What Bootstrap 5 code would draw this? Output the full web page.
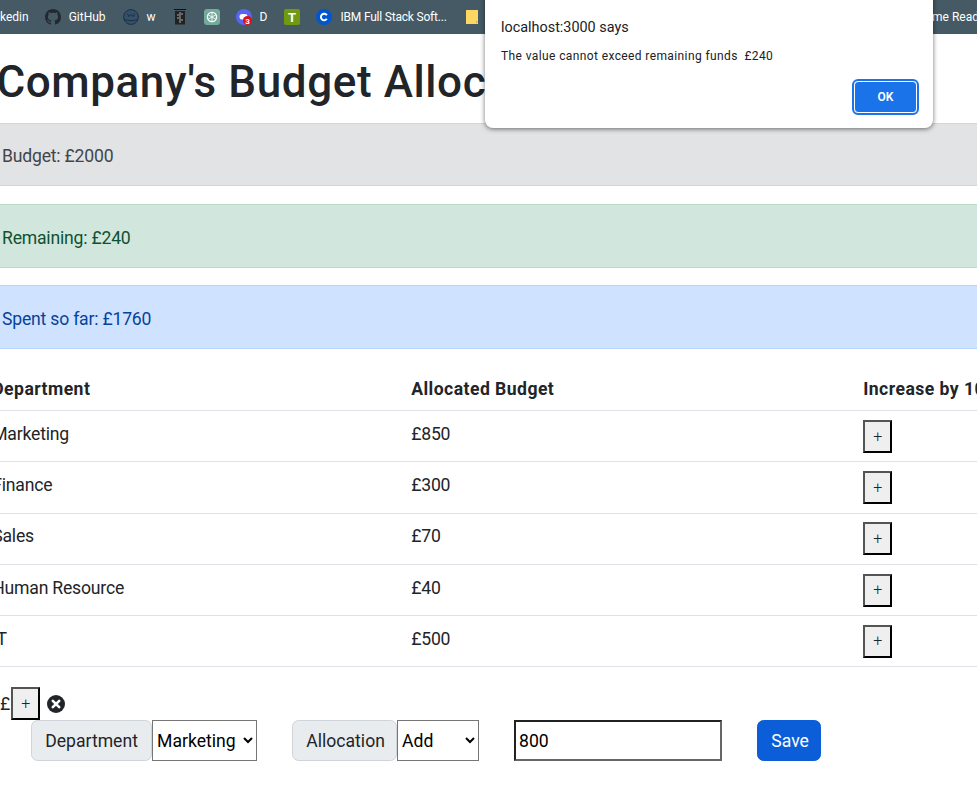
<!DOCTYPE html>
<html lang="en">
<head>
  <meta charset="UTF-8">
  <meta name="viewport" content="width=device-width, initial-scale=1.0">
  <title>Company's Budget Allocation</title>
  <link rel="stylesheet" href="https://cdn.jsdelivr.net/npm/bootstrap@5.3.0/dist/css/bootstrap.min.css">
  <style>
    html { font-size: 17.6px; }
    body {
      font-family: Roboto, "Noto Sans", sans-serif;
      font-size: 17.6px;
      color: #212529;
      overflow: hidden;
      height: 812px;
      position: relative;
    }

    .bm-bar {
      height: 34px;
      background-color: #455a64;
      color: #fff;
      font-size: 12px;
      white-space: nowrap;
      overflow: hidden;
    }
    .bm-item { gap: 8px; margin-right: 16px; }
    .bm-item svg { width: 16px; height: 16px; flex: none; }
    .bm-wide { margin-right: 17px; }
    .bm-long { margin-right: 18px; letter-spacing: -.2px; }
    .bm-end { margin-left: auto; margin-right: -2px; flex: none; }

    .page-wrap { width: 1320px; margin-left: -16.6px; }
    .page-title { font-size: 44px; letter-spacing: .6px; margin: 22px 0 14px 13px; }
    .budget-alert { padding: 19.6px 17.6px 15.6px; letter-spacing: -.2px; }
    .budget-alert-grey { background-color: #e2e3e5; border-color: #d3d6d8; color: #41464b; }
    .budget-alert-green { background-color: #d1e7dd; border-color: #badbcc; color: #0f5132; }
    .budget-alert-blue { background-color: #cfe2ff; border-color: #b6d4fe; color: #084298; }
    .dept-col { width: 419px; }
    .alloc-col { width: 452px; }
    .budget-table { margin-bottom: 20px; }
    .budget-table td, .budget-table th { border-color: #dee2e6; color: #212529; }
    .budget-table th { padding: 9.8px 8.8px 7.8px; letter-spacing: .45px; }
    .budget-table td { padding: 9.8px 8.8px 8px; letter-spacing: -.2px; }
    .budget-table td.btn-cell { padding: 8.8px 8.8px 8.4px; }
    .plus-btn { width: 29px; height: 33px; padding: 0; font-size: 16px; font-weight: 300; color: #212529; }
    .cost-line { padding-left: 16.6px; height: 33px; }
    .cost-line .plus-btn { margin-left: 1px; }
    .del-icon { width: 18px; height: 18px; margin-left: 7px; }
    .form-line { padding-left: 47.6px; }
    .form-line select { border: 1px solid #767676; background: #fff; height: 41px; }
    .form-line .input-group-text { height: 41px; background-color: #e9ecef; border-color: #ced4da; color: #212529; }
    .form-line .alloc-label { width: 105px; }
    .dept-select { width: 105px; }
    .alloc-select { width: 82px; }
    .alloc-group { margin-left: 35px; }
    .amount-input {
      width: 208px;
      height: 41px;
      margin-left: 35px;
      font-size: 17.6px;
      padding: 1px 3px;
      border-width: 2px;
      border-style: solid;
      border-color: #222 #666 #666 #222;
    }
    .save-btn { margin-left: 35px; height: 41px; width: 64px; background-color: #0b5ed7; border-color: #0b5ed7; }

    .js-dialog {
      position: absolute;
      left: 485px;
      top: -8px;
      width: 448px;
      height: 136px;
      background: #fff;
      border-radius: 8px;
      box-shadow: 0 1px 5px rgba(0, 0, 0, .55);
      padding: 26px 16px 0;
      color: #202124;
    }
    .js-dialog-title { font-size: 14.4px; line-height: 20px; margin-bottom: 9px; }
    .js-dialog-msg { font-size: 12px; line-height: 18px; letter-spacing: .39px; }
    .js-dialog-ok {
      position: absolute;
      right: 16px;
      bottom: 15px;
      width: 63px;
      height: 32px;
      background: #1a73e8;
      color: #fff;
      font-size: 12px;
      font-weight: 600;
      border: 1px solid #fff;
      outline: 2px solid #1a73e8;
      outline-offset: 0;
      border-radius: 4px;
    }
  </style>
</head>
<body>
  <div class="bm-bar d-flex align-items-center">
    <span class="bm-item d-flex align-items-center ms-n1">kedin</span>
    <span class="bm-item bm-wide d-flex align-items-center">
      <svg viewBox="0 0 16 16"><path fill="#24292f" d="M8 0C3.58 0 0 3.58 0 8c0 3.54 2.29 6.53 5.47 7.59.4.07.55-.17.55-.38 0-.19-.01-.82-.01-1.49-2.01.37-2.53-.49-2.69-.94-.09-.23-.48-.94-.82-1.13-.28-.15-.68-.52-.01-.53.63-.01 1.08.58 1.23.82.72 1.21 1.87.87 2.33.66.07-.52.28-.87.51-1.07-1.78-.2-3.64-.89-3.64-3.95 0-.87.31-1.59.82-2.15-.08-.2-.36-1.02.08-2.12 0 0 .67-.21 2.2.82.64-.18 1.32-.27 2-.27.68 0 1.36.09 2 .27 1.53-1.04 2.2-.82 2.2-.82.44 1.1.16 1.92.08 2.12.51.56.82 1.27.82 2.15 0 3.07-1.87 3.75-3.65 3.95.29.25.54.73.54 1.48 0 1.07-.01 1.93-.01 2.2 0 .21.15.46.55.38A8.012 8.012 0 0 0 16 8c0-4.42-3.58-8-8-8z"/></svg>
      GitHub
    </span>
    <span class="bm-item d-flex align-items-center">
      <svg viewBox="0 0 16 16"><circle cx="8" cy="8" r="7.4" fill="#34506a" stroke="#1d2f42" stroke-width="1"/><path d="M4.5 4.5l1.4 3.2 2.1-2.4 2.1 2.4 1.4-3.2" fill="none" stroke="#1d2f42" stroke-width="1"/><path d="M1.5 10.5c3 1.6 10 1.6 13 0" fill="none" stroke="#1d2f42"/></svg>
      w
    </span>
    <span class="bm-item d-flex align-items-center">
      <svg viewBox="0 0 16 16"><path d="M2 .5h12" stroke="#111"/><rect x="3" y="2" width="10" height="13.5" fill="#222"/><path d="M8 3v11M5 6h2M5 9h2M9 5h2M9 11h2" stroke="#aaa" stroke-width="1"/></svg>
    </span>
    <span class="bm-item d-flex align-items-center">
      <svg viewBox="0 0 16 16"><rect width="16" height="16" rx="3" fill="#74aa9c"/><circle cx="8" cy="8" r="4.6" fill="none" stroke="#fff" stroke-width="1.3"/><path d="M8 3.4v9.2M4 5.7l8 4.6M4 10.3l8-4.6" stroke="#fff" stroke-width=".8"/></svg>
    </span>
    <span class="bm-item bm-wide d-flex align-items-center">
      <svg viewBox="0 0 16 16"><circle cx="8" cy="8" r="8" fill="#5865f2"/><rect x="3.5" y="5" width="8" height="5.5" rx="2.5" fill="#fff"/><circle cx="11.5" cy="11.5" r="4.5" fill="#e01018"/><text x="11.5" y="14.5" font-size="8" font-weight="700" fill="#fff" text-anchor="middle">3</text></svg>
      D
    </span>
    <span class="bm-item d-flex align-items-center">
      <svg viewBox="0 0 16 16"><rect width="16" height="16" rx="2" fill="#6f9a12"/><text x="8" y="13" font-size="13" font-weight="700" fill="#fff" text-anchor="middle">T</text></svg>
    </span>
    <span class="bm-item bm-long d-flex align-items-center">
      <svg viewBox="0 0 16 16"><circle cx="8" cy="8" r="8" fill="#0056d2"/><path d="M10.8 6.2a3.2 3.2 0 1 0 0 3.6" fill="none" stroke="#fff" stroke-width="2"/></svg>
      IBM Full Stack Soft...
    </span>
    <span class="bm-item d-flex align-items-center">
      <svg viewBox="0 0 16 16"><path d="M1 1h12v14H1z" fill="#fdd663"/><path d="M11 15v-3h2z" fill="#e3b341"/></svg>
    </span>
    <span class="bm-end">ime Read</span>
  </div>

  <div class="page-wrap">
    <h1 class="page-title">Company's Budget Allocation</h1>
    <div class="alert budget-alert budget-alert-grey" role="alert">Budget: £2000</div>
    <div class="alert budget-alert budget-alert-green" role="alert">Remaining: £240</div>
    <div class="alert budget-alert budget-alert-blue" role="alert">Spent so far: £1760</div>

    <table class="table budget-table">
      <thead>
        <tr>
          <th class="dept-col">Department</th>
          <th class="alloc-col">Allocated Budget</th>
          <th>Increase by 10</th>
        </tr>
      </thead>
      <tbody>
        <tr><td>Marketing</td><td>£850</td><td class="btn-cell"><button type="button" class="plus-btn">+</button></td></tr>
        <tr><td>Finance</td><td>£300</td><td class="btn-cell"><button type="button" class="plus-btn">+</button></td></tr>
        <tr><td>Sales</td><td>£70</td><td class="btn-cell"><button type="button" class="plus-btn">+</button></td></tr>
        <tr><td>Human Resource</td><td>£40</td><td class="btn-cell"><button type="button" class="plus-btn">+</button></td></tr>
        <tr><td>IT</td><td>£500</td><td class="btn-cell"><button type="button" class="plus-btn">+</button></td></tr>
      </tbody>
    </table>

    <div class="cost-line d-flex align-items-center">
      £<button type="button" class="plus-btn">+</button>
      <svg class="del-icon" viewBox="0 0 18 18"><circle cx="9" cy="9" r="9" fill="#212529"/><path d="M5.8 5.8l6.4 6.4M12.2 5.8l-6.4 6.4" stroke="#fff" stroke-width="2.6" stroke-linecap="round"/></svg>
    </div>

    <div class="form-line d-flex align-items-center">
      <div class="d-flex">
        <div><label class="input-group-text" for="dept">Department</label></div>
        <select id="dept" class="dept-select">
          <option>Marketing</option>
          <option>Finance</option>
          <option>Sales</option>
          <option>Human Resource</option>
          <option>IT</option>
        </select>
      </div>
      <div class="d-flex alloc-group">
        <div><label class="input-group-text alloc-label" for="alloc">Allocation</label></div>
        <select id="alloc" class="alloc-select">
          <option>Add</option>
          <option>Reduce</option>
        </select>
      </div>
      <input type="number" class="amount-input" value="800">
      <button type="button" class="btn btn-primary save-btn">Save</button>
    </div>
  </div>

  <div class="js-dialog">
    <div class="js-dialog-title">localhost:3000 says</div>
    <div class="js-dialog-msg">The value cannot exceed remaining funds&nbsp; £240</div>
    <button type="button" class="js-dialog-ok">OK</button>
  </div>

  <script src="https://cdn.jsdelivr.net/npm/bootstrap@5.3.0/dist/js/bootstrap.bundle.min.js"></script>
</body>
</html>
